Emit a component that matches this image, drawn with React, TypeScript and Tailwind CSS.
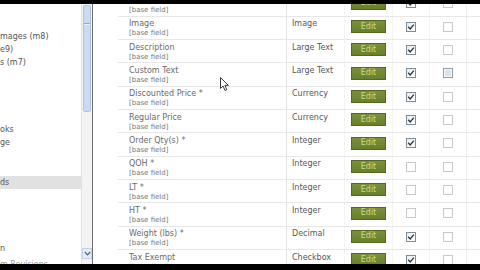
import React from "react";

type Row = { label: string; type: string; c1: boolean; c2: boolean; hl?: boolean };

const rows: Row[] = [
  { label: "Name *", type: "Text", c1: true, c2: false },
  { label: "Image", type: "Image", c1: true, c2: false },
  { label: "Description", type: "Large Text", c1: true, c2: false },
  { label: "Custom Text", type: "Large Text", c1: true, c2: false, hl: true },
  { label: "Discounted Price *", type: "Currency", c1: true, c2: false },
  { label: "Regular Price", type: "Currency", c1: true, c2: false },
  { label: "Order Qty(s) *", type: "Integer", c1: true, c2: false },
  { label: "QOH *", type: "Integer", c1: false, c2: false },
  { label: "LT *", type: "Integer", c1: false, c2: false },
  { label: "HT *", type: "Integer", c1: false, c2: false },
  { label: "Weight (lbs) *", type: "Decimal", c1: true, c2: false },
  { label: "Tax Exempt", type: "Checkbox", c1: true, c2: false },
];

const sideItems: { t: string; hl?: boolean; light?: boolean }[] = [
  { t: "mages (m8)" },
  { t: "e9)" },
  { t: "s (m7)" },
  { t: "" },
  { t: "" },
  { t: "" },
  { t: "" },
  { t: "oks" },
  { t: "ge" },
  { t: "" },
  { t: "" },
  { t: "ds", hl: true },
  { t: "" },
  { t: "" },
  { t: "" },
  { t: "" },
  { t: "n" },
  { t: "m Revisions", light: true },
];

function Box({ checked, hl }: { checked: boolean; hl?: boolean }) {
  if (checked) {
    return (
      <div className="w-[10px] h-[10px] border border-[#7d8c99] bg-gradient-to-br from-[#e9edf0] to-white flex items-center justify-center">
        <svg width="8" height="8" viewBox="0 0 8 8">
          <path d="M1.2 3.8 L3.2 5.9 L6.8 1.6" fill="none" stroke="#2b3338" strokeWidth="1.3" />
        </svg>
      </div>
    );
  }
  if (hl) {
    return <div className="w-[10px] h-[10px] border border-[#8e9cab] bg-[#dde4ea] shadow-[inset_0_0_0_1px_#f4f6f8]" />;
  }
  return <div className="w-[10px] h-[10px] border border-[#c9c9c9] bg-white" />;
}

export default function App() {
  return (
    <div
      className="w-[480px] h-[270px] bg-black flex flex-col overflow-hidden relative"
      style={{ fontFamily: '"DejaVu Sans", Verdana, sans-serif' }}
    >
      <div className="h-[4px] shrink-0" />
      <div className="h-[260px] shrink-0 bg-white flex overflow-hidden">
        {/* sidebar */}
        <div className="w-[82px] shrink-0 flex flex-col pt-[25.5px] border-r border-[#e2e2e2]">
          {sideItems.map((s, i) => (
            <div
              key={i}
              className={
                "h-[13.3px] shrink-0 leading-[13.3px] text-[8px] whitespace-nowrap overflow-hidden " +
                (s.hl ? "bg-[#e1e1e1] " : "") +
                (s.light ? "text-[#9a9a9a] mt-[2px]" : "text-[#555]")
              }
            >
              {s.t}
            </div>
          ))}
        </div>
        {/* scrollbar */}
        <div className="w-[10px] shrink-0 flex flex-col bg-[#f3f3f3]">
          <div className="h-[1px]" />
          <div className="h-[107px] mx-[1px] rounded-[2px] bg-[#cbdaf1] border border-[#aec3e4] flex flex-col items-center pt-[17px]">
            <div className="w-[6px] h-[1px] bg-[#8fa8d2]" />
            <div className="w-[6px] h-[1px] bg-[#eef3fb]" />
          </div>
          <div className="flex-1" />
          <div className="h-[11px] mb-[1px] bg-[#e6ecf6] border border-[#c3d1e8] flex items-center justify-center">
            <svg width="7" height="5" viewBox="0 0 7 5">
              <path d="M0.8 1 L3.5 3.8 L6.2 1" fill="none" stroke="#4d6185" strokeWidth="1.2" />
            </svg>
          </div>
          <div className="h-[4px]" />
        </div>
        <div className="w-[1px] shrink-0 bg-[#6f6f6f]" />
        <div className="w-[16px] shrink-0" />
        {/* grip */}
        <div className="w-[9px] shrink-0 bg-[radial-gradient(circle,#a3a3a3_30%,transparent_45%)] bg-[length:2px_2px]" />
        {/* table */}
        <div className="flex-1 overflow-hidden">
          <div className="-mt-[10.6px] flex flex-col">
            {rows.map((r, i) => (
              <div key={i} className="h-[23.33px] shrink-0 flex border-b border-[#e7e7e7]">
                <div className="w-[169px] shrink-0 pl-[11px] pt-[2.5px] border-r border-[#e3e3e3] flex flex-col">
                  <div className="text-[8px] leading-[10px] text-[#6a6a6a] whitespace-nowrap">{r.label}</div>
                  <div className="text-[7px] leading-[8px] text-[#777] whitespace-nowrap">[base field]</div>
                </div>
                <div className="w-[58px] shrink-0 pl-[5px] pt-[2.5px] border-r border-[#f3f3f3]">
                  <div className="text-[8px] leading-[10px] text-[#585858] whitespace-nowrap">{r.type}</div>
                </div>
                <div className="w-[48px] shrink-0 flex justify-center pt-[3.3px] border-r border-[#f3f3f3]">
                  <div className="w-[35px] h-[13px] bg-gradient-to-b from-[#7a903b] to-[#67802c] border border-[#55681f] flex items-center justify-center text-[8px] leading-[10px] text-[#cbd98f]">
                    Edit
                  </div>
                </div>
                <div className="w-[37px] shrink-0 flex justify-center pt-[5px] border-r border-[#f3f3f3]">
                  <Box checked={r.c1} />
                </div>
                <div className="w-[37px] shrink-0 flex justify-center pt-[5px] border-r border-[#efefef]">
                  <Box checked={r.c2} hl={r.hl} />
                </div>
                <div className="flex-1" />
              </div>
            ))}
          </div>
        </div>
      </div>
      {/* mouse cursor */}
      <svg className="absolute left-[220px] top-[77px]" width="10" height="15" viewBox="0 0 10 15">
        <path d="M0.5 0.5 L0.5 11.5 L3 9 L5 13.5 L6.8 12.7 L4.9 8.4 L8.4 8.4 Z" fill="#fff" stroke="#222" strokeWidth="0.9" strokeLinejoin="round" />
      </svg>
    </div>
  );
}
